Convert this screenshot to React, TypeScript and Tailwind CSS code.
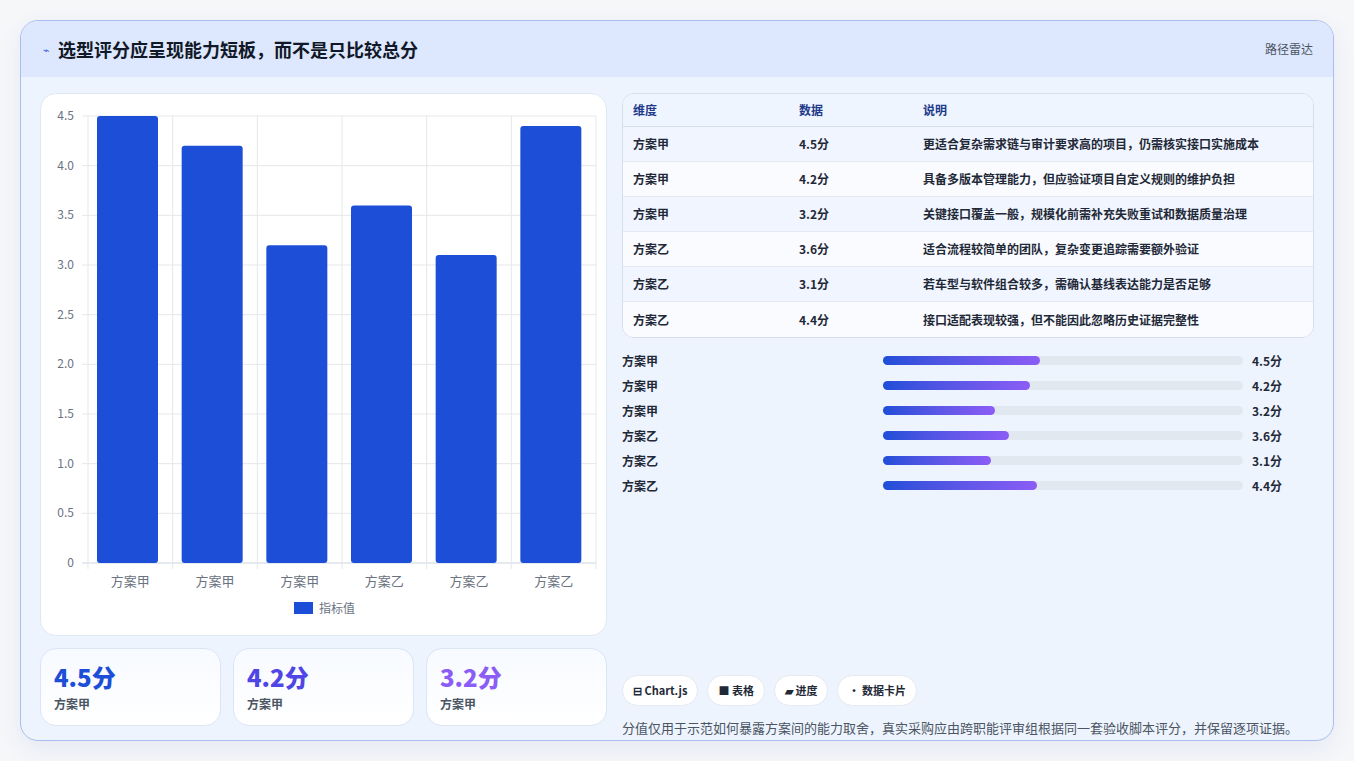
const bars = [
  { l: '方案甲', v: 4.5 },
  { l: '方案甲', v: 4.2 },
  { l: '方案甲', v: 3.2 },
  { l: '方案乙', v: 3.6 },
  { l: '方案乙', v: 3.1 },
  { l: '方案乙', v: 4.4 },
]

const rows = [
  ['方案甲', '4.5分', '更适合复杂需求链与审计要求高的项目，仍需核实接口实施成本'],
  ['方案甲', '4.2分', '具备多版本管理能力，但应验证项目自定义规则的维护负担'],
  ['方案甲', '3.2分', '关键接口覆盖一般，规模化前需补充失败重试和数据质量治理'],
  ['方案乙', '3.6分', '适合流程较简单的团队，复杂变更追踪需要额外验证'],
  ['方案乙', '3.1分', '若车型与软件组合较多，需确认基线表达能力是否足够'],
  ['方案乙', '4.4分', '接口适配表现较强，但不能因此忽略历史证据完整性'],
]

function Chart() {
  const L = 47, T = 22, R = 555, B = 469
  const cw = (R - L) / 6
  const y = (v: number) => B - (v / 4.5) * (B - T)
  const ticks = [0, 0.5, 1, 1.5, 2, 2.5, 3, 3.5, 4, 4.5]
  return (
    <svg width="566" height="542" className="block">
      {ticks.map((t) => (
        <g key={t}>
          <line x1={L - 6} x2={R} y1={y(t)} y2={y(t)} stroke={t === 0 ? '#cbd5e1' : '#e5e7eb'} />
          <text x={L - 14} y={y(t) + 4} textAnchor="end" fontSize="12" fill="#6b7280">
            {t === 0 ? '0' : t.toFixed(1)}
          </text>
        </g>
      ))}
      {[0, 1, 2, 3, 4, 5, 6].map((i) => (
        <line key={i} x1={L + i * cw} x2={L + i * cw} y1={T} y2={B + 6} stroke="#e5e7eb" />
      ))}
      {bars.map((b, i) => (
        <g key={i}>
          <rect x={L + i * cw + 9} y={y(b.v)} width={61} height={B - y(b.v)} rx="3" fill="#1d4ed8" />
          <text x={L + i * cw + cw / 2} y={B + 23} textAnchor="middle" fontSize="13" fill="#6b7280">
            {b.l}
          </text>
        </g>
      ))}
      <rect x="253" y="508" width="19" height="12" fill="#1d4ed8" />
      <text x="278" y="519" fontSize="12" fill="#6b7280">指标值</text>
    </svg>
  )
}

function Stat({ v, color }: { v: string; color: string }) {
  return (
    <div className="flex-1 rounded-2xl border border-[#dbe5f5] bg-gradient-to-b from-[#f7faff] to-white px-[13px] pt-[12px] pb-[12px]">
      <div className={`text-[24px] font-extrabold leading-[32px] ${color}`}>{v}</div>
      <div className="mt-[2px] text-[12px] font-semibold text-[#4b5563]">方案甲</div>
    </div>
  )
}

export default function App() {
  return (
    <div
      className="min-h-[761px] bg-[#f6f7f9] p-[20px]"
      style={{ fontFamily: '"Noto Sans CJK SC", "Noto Sans", sans-serif' }}
    >
      <div className="h-[721px] overflow-hidden rounded-[18px] border border-[#a9bdf0] bg-[#eef4fe] shadow-[0_8px_24px_rgba(30,64,175,0.08)]">
        <div className="flex h-[56px] items-center justify-between bg-[#dde7fd] pl-[22px] pr-[20px]">
          <div className="flex items-center gap-[8px]">
            <span className="text-[11px] text-[#3b5bdb]">⌁</span>
            <span className="text-[18px] font-bold text-[#111827]">选型评分应呈现能力短板，而不是只比较总分</span>
          </div>
          <span className="text-[12px] text-[#4b5563]">路径雷达</span>
        </div>
        <div className="flex gap-[15px] px-[19px] pt-[16px]">
          <div className="flex w-[567px] flex-col gap-[12px]">
            <div className="h-[543px] rounded-2xl border border-[#e1e8f3] bg-white">
              <Chart />
            </div>
            <div className="flex gap-[12px]">
              <Stat v="4.5分" color="text-[#1d4ed8]" />
              <Stat v="4.2分" color="text-[#4f46e5]" />
              <Stat v="3.2分" color="text-[#8b5cf6]" />
            </div>
          </div>
          <div className="flex w-[694px] flex-col">
            <div className="overflow-hidden rounded-xl border border-[#d5deeb] bg-white text-[12px]">
              <div className="flex h-[33px] items-center border-b border-[#d5deeb] bg-[#eff5fe] font-semibold text-[#1e3a8a]">
                <div className="w-[166px] pl-[10px]">维度</div>
                <div className="w-[124px] pl-[10px]">数据</div>
                <div className="flex-1 pl-[10px]">说明</div>
              </div>
              {rows.map((r, i) => (
                <div
                  key={i}
                  className={`flex h-[35px] items-center border-b border-[#e5eaf2] text-[#1f2937] last:border-b-0 ${i % 2 === 0 ? 'bg-[#f0f5ff]' : 'bg-[#f9fbff]'}`}
                >
                  <div className="w-[166px] pl-[10px] font-semibold">{r[0]}</div>
                  <div className="w-[124px] pl-[10px] font-semibold">{r[1]}</div>
                  <div className="flex-1 pl-[10px] font-semibold">{r[2]}</div>
                </div>
              ))}
            </div>
            <div className="mt-[10px] flex flex-col">
              {bars.map((b, i) => (
                <div key={i} className="flex h-[25px] items-center text-[12px] font-semibold text-[#1f2937]">
                  <div className="w-[261px]">{b.l}</div>
                  <div className="h-[9px] w-[360px] rounded-full bg-[#e2e8f0]">
                    <div
                      className="h-full rounded-full bg-gradient-to-r from-[#1d4ed8] to-[#8b5cf6]"
                      style={{ width: `${b.v * 9.7}%` }}
                    />
                  </div>
                  <div className="ml-[9px]">{b.v}分</div>
                </div>
              ))}
            </div>
            <div className="mt-[177px] flex gap-[9px] text-[11px] font-semibold text-[#1f2937]">
              {['⊟ Chart.js', '■ 表格', '▰ 进度', '• 数据卡片'].map((c) => (
                <span key={c} className="rounded-full border border-[#e5eaf2] bg-white px-[10px] py-[6px]">
                  {c}
                </span>
              ))}
            </div>
            <div className="mt-[12px] text-[13px] text-[#4b5563]">
              分值仅用于示范如何暴露方案间的能力取舍，真实采购应由跨职能评审组根据同一套验收脚本评分，并保留逐项证据。
            </div>
          </div>
        </div>
      </div>
    </div>
  )
}
